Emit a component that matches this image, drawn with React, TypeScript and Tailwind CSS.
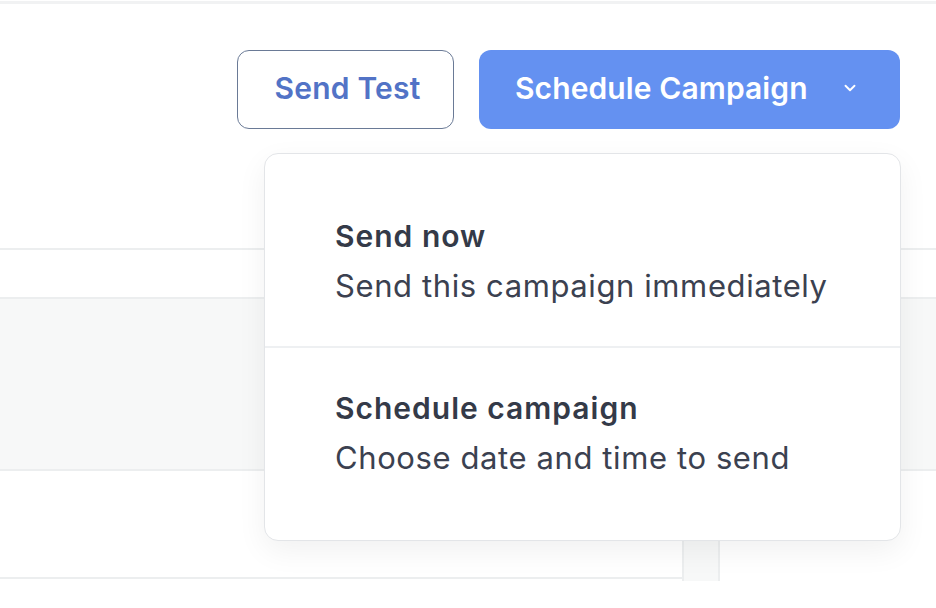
import { ChevronDown } from "lucide-react";

const font = { fontFamily: "Inter, 'Noto Sans', sans-serif" };

function MenuItem({ title, text, top }: { title: string; text: string; top: string }) {
    return (
        <div className={`flex flex-col h-[171px] pl-[70px] gap-[16px] ${top}`}>
            <div className="text-[30px] leading-[34px] font-semibold text-[#343a48] tracking-[1px]">{title}</div>
            <div className="text-[31px] leading-[34px] text-[#3b4150] tracking-[0.6px]">{text}</div>
        </div>
    );
}

export default function App() {
    return (
        <div className="relative w-[936px] h-[608px] overflow-hidden bg-white" style={font}>
            <div className="h-[3px] mt-[1px] bg-[#f1f2f3]" />

            {/* header actions */}
            <div className="flex justify-end gap-[25px] pr-[36px] pt-[46px]">
                <button className="w-[217px] h-[79px] rounded-[12px] border-[1.5px] border-[#6a7a96] text-[#5273c6] text-[30px] font-semibold tracking-[0.2px] pl-[4px] pb-[3px]">
                    Send Test
                </button>
                <button className="w-[421px] h-[79px] rounded-[12px] bg-[#6491f1] text-white text-[30px] font-semibold tracking-[0.1px] flex items-center pl-[36px] pb-[3px]">
                    Schedule Campaign
                    <ChevronDown className="ml-[33px] text-white" size={18} strokeWidth={2.5} />
                </button>
            </div>

            {/* table behind the menu */}
            <div className="mt-[119px] border-t-[2px] border-[#eceeef]">
                <div className="h-[47px]" />
                <div className="h-[174px] bg-[#f7f8f8] border-t-[2px] border-b-[2px] border-[#eceeef]" />
                <div className="flex h-[110px]">
                    <div className="w-[682px] border-b-[2px] border-[#eceeef] h-[108px]" />
                    <div className="w-[38px] bg-[#f7f8f8] border-l-[2px] border-r-[2px] border-[#eceeef]" />
                </div>
            </div>

            {/* dropdown menu */}
            <div className="absolute left-[264px] top-[153px] w-[637px] h-[388px] rounded-[14px] border border-[#e3e5e8] bg-white shadow-[0_10px_30px_rgba(0,0,0,0.06)] flex flex-col pt-[21px] overflow-hidden">
                <MenuItem title="Send now" text="Send this campaign immediately" top="pt-[44px]" />
                <div className="h-[2px] bg-[#eef0f2]" />
                <MenuItem title="Schedule campaign" text="Choose date and time to send" top="pt-[43px]" />
            </div>
        </div>
    );
}
